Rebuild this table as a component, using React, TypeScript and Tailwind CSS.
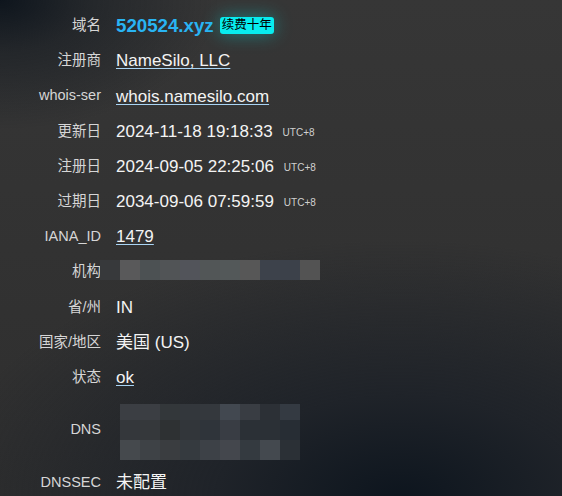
import type { ReactNode } from "react";

const orgCells = [
  "#59595a",
  "#4c5153",
  "#515456",
  "#52545a",
  "#525657",
  "#535859",
  "#575757",
  "#3d424b",
  "#3c414a",
  "#535353",
];

const dnsCells = [
  ["#3b3e43", "#3b3e43", "#33373a", "#33373c", "#34383d", "#424850", "#393d43", "#2c3036", "#343a42"],
  ["#34373b", "#35383b", "#2e3133", "#32363a", "#2f343a", "#393d44", "#2b3036", "#2b3036", "#272d34"],
  ["#45494d", "#3e4246", "#3a3d40", "#353a3f", "#3d4147", "#44474d", "#343a40", "#44494f", "#2b3036"],
];

const Row = ({ label, children, tall }: { label: string; children: ReactNode; tall?: boolean }) => (
  <>
    <div className={`flex items-center justify-end text-[14.5px] text-[#d6d6d6] ${tall ? "h-[69.4px]" : "h-[35.2px]"}`}>
      {label}
    </div>
    <div className={`flex items-center text-[17px] text-[#f4f4f4] ${tall ? "h-[69.4px]" : "h-[35.2px]"}`}>
      {children}
    </div>
  </>
);

const Link = ({ children }: { children: ReactNode }) => (
  <span className="underline decoration-[#a9d4f4] decoration-1 underline-offset-[2px]">{children}</span>
);

const DateValue = ({ value }: { value: string }) => (
  <>
    <span>{value}</span>
    <span className="ml-[10px] mt-[2px] text-[10px] text-[#d0d0d0]">UTC+8</span>
  </>
);

const App = () => {
  return (
    <div
      className="min-h-[496px] w-full bg-[radial-gradient(ellipse_220px_130px_at_0_0,#0e151d_0%,rgba(14,21,29,0.45)_40%,rgba(14,21,29,0)_100%),radial-gradient(ellipse_460px_260px_at_400px_500px,#0d151e_0%,#1f2329_40%,rgba(50,50,50,0)_100%),linear-gradient(to_bottom,#363636,#2e2e2e)] pt-[8.4px]"
      style={{ fontFamily: '"Liberation Sans", Arial, "Noto Sans CJK SC", sans-serif' }}
    >
      <div className="grid grid-cols-[101px_1fr] gap-x-[15px]">
        <Row label="域名">
          <span className="text-[18.7px] font-bold text-[#29b4f3]">520524.xyz</span>
          <span className="ml-[6px] rounded-[3px] bg-[#08ecef] px-[2px] text-[12.5px] leading-[17px] text-black shadow-[0_0_18px_rgba(0,220,220,0.45)]">
            续费十年
          </span>
        </Row>
        <Row label="注册商">
          <Link>NameSilo, LLC</Link>
        </Row>
        <Row label="whois-ser">
          <Link>whois.namesilo.com</Link>
        </Row>
        <Row label="更新日">
          <DateValue value="2024-11-18 19:18:33" />
        </Row>
        <Row label="注册日">
          <DateValue value="2024-09-05 22:25:06" />
        </Row>
        <Row label="过期日">
          <DateValue value="2034-09-06 07:59:59" />
        </Row>
        <Row label="IANA_ID">
          <Link>1479</Link>
        </Row>
        <Row label="机构">
          <div className="-ml-4 -mt-[5px] flex h-5">
            <div className="h-5 w-5 bg-[#37393b]" />
            {orgCells.map((c, i) => (
              <div key={i} className="h-5 w-5" style={{ backgroundColor: c }} />
            ))}
          </div>
        </Row>
        <Row label="省/州">IN</Row>
        <Row label="国家/地区">美国 (US)</Row>
        <Row label="状态">
          <Link>ok</Link>
        </Row>
        <Row label="DNS" tall>
          <div className="ml-1 mt-[4px] flex flex-col">
            {dnsCells.map((row, r) => (
              <div key={r} className={`flex ${r === 0 ? "h-4" : "h-5"}`}>
                {row.map((c, i) => (
                  <div key={i} className="w-5" style={{ backgroundColor: c }} />
                ))}
              </div>
            ))}
          </div>
        </Row>
        <Row label="DNSSEC">未配置</Row>
      </div>
    </div>
  );
};

export default App;
